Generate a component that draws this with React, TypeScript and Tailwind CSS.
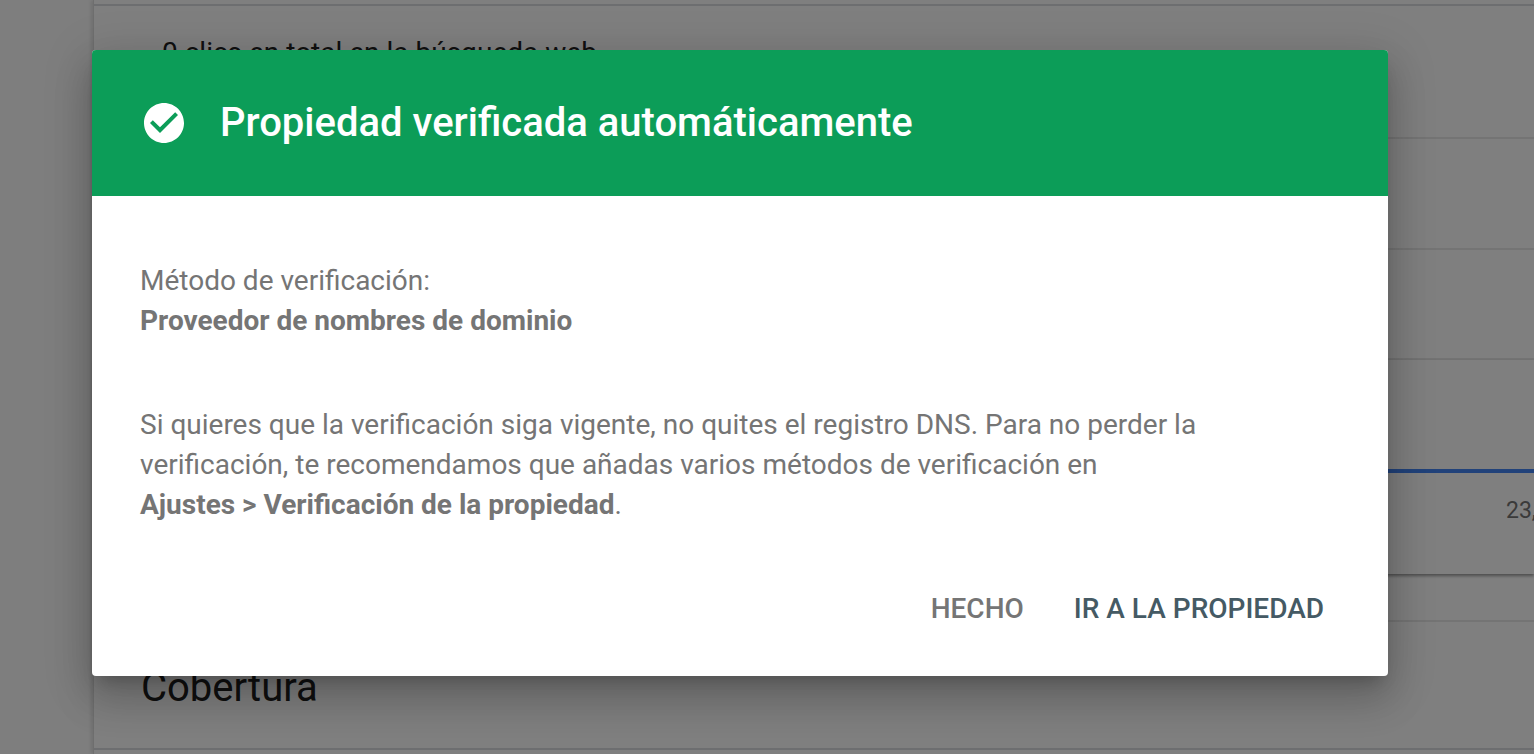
const roboto = "font-['Roboto','Liberation_Sans',sans-serif]";

function CheckCircle() {
  return (
    <svg viewBox="0 0 24 24" className="w-12 h-12 fill-white shrink-0">
      <path d="M12 2C6.48 2 2 6.48 2 12s4.48 10 10 10 10-4.48 10-10S17.52 2 12 2zm-2 15l-5-5 1.41-1.41L10 14.17l7.59-7.59L19 8l-9 9z" />
    </svg>
  );
}

function Background() {
  return (
    <div className="flex h-[754px] bg-white">
      <div className="w-[93px] shrink-0 bg-[#fdfdfd]" />
      <div className="flex-1 flex flex-col border-l border-[#dcdcdc] shadow-[-2px_0_4px_rgba(0,0,0,0.12)]">
        <div className="h-[6px] shrink-0 border-b-2 border-[#dadce0]" />
        <div className="h-[133px] shrink-0 border-b-2 border-[#e8e8e8] pl-[68px] pt-[31px]">
          <p className="text-[28px] leading-[32px] text-[#212121]">0 clics en total en la búsqueda web</p>
        </div>
        <div className="h-[111px] shrink-0 border-b-2 border-[#e8e8e8]" />
        <div className="h-[110px] shrink-0 border-b-2 border-[#e8e8e8]" />
        <div className="h-[214px] shrink-0 flex flex-col shadow-[0_2px_3px_rgba(0,0,0,0.4)]">
          <div className="h-[113px] shrink-0 border-b-4 border-[#4285f4]" />
          <div className="flex justify-end pt-[24px] overflow-hidden">
            <span className="w-[28px] overflow-hidden text-[23px] leading-[28px] text-[#757575] whitespace-nowrap">23,</span>
          </div>
        </div>
        <div className="h-[48px] shrink-0 border-b-2 border-[#e8e8e8]" />
        <div className="h-[128px] shrink-0 border-b-2 border-[#dadce0] pl-[47px] pt-[44px]">
          <h2 className="text-[40px] leading-[44px] text-[#212121]">Cobertura</h2>
        </div>
      </div>
    </div>
  );
}

export default function App() {
  return (
    <div className={`relative h-[754px] overflow-hidden ${roboto}`}>
      <Background />
      <div className="absolute inset-0 bg-black/50" />
      <div className="absolute left-[92px] top-[50px] w-[1296px] h-[626px] rounded-[4px] overflow-hidden bg-white flex flex-col shadow-[0_24px_38px_3px_rgba(0,0,0,0.14),0_9px_46px_8px_rgba(0,0,0,0.12),0_11px_15px_-7px_rgba(0,0,0,0.2)]">
        <div className="h-[146px] shrink-0 bg-[#0c9d58] flex items-center pl-[48px] gap-[32px]">
          <CheckCircle />
          <h1 className="text-[40px] leading-[48px] font-medium text-white">Propiedad verificada automáticamente</h1>
        </div>
        <div className="flex-1 flex flex-col px-[48px] pt-[65px] text-[28px] leading-[40px] text-[#757575]">
          <p>
            Método de verificación:
            <br />
            <strong className="font-bold">Proveedor de nombres de dominio</strong>
          </p>
          <p className="mt-[64px]">
            Si quieres que la verificación siga vigente, no quites el registro DNS. Para no perder la
            <br />
            verificación, te recomendamos que añadas varios métodos de verificación en
            <br />
            <strong className="font-bold">Ajustes &gt; Verificación de la propiedad</strong>.
          </p>
          <div className="mt-[64px] flex justify-end gap-[50px] pr-[16px] text-[28px] leading-[40px] font-medium">
            <button>HECHO</button>
            <button className="text-[#455a64]">IR A LA PROPIEDAD</button>
          </div>
        </div>
      </div>
    </div>
  );
}
